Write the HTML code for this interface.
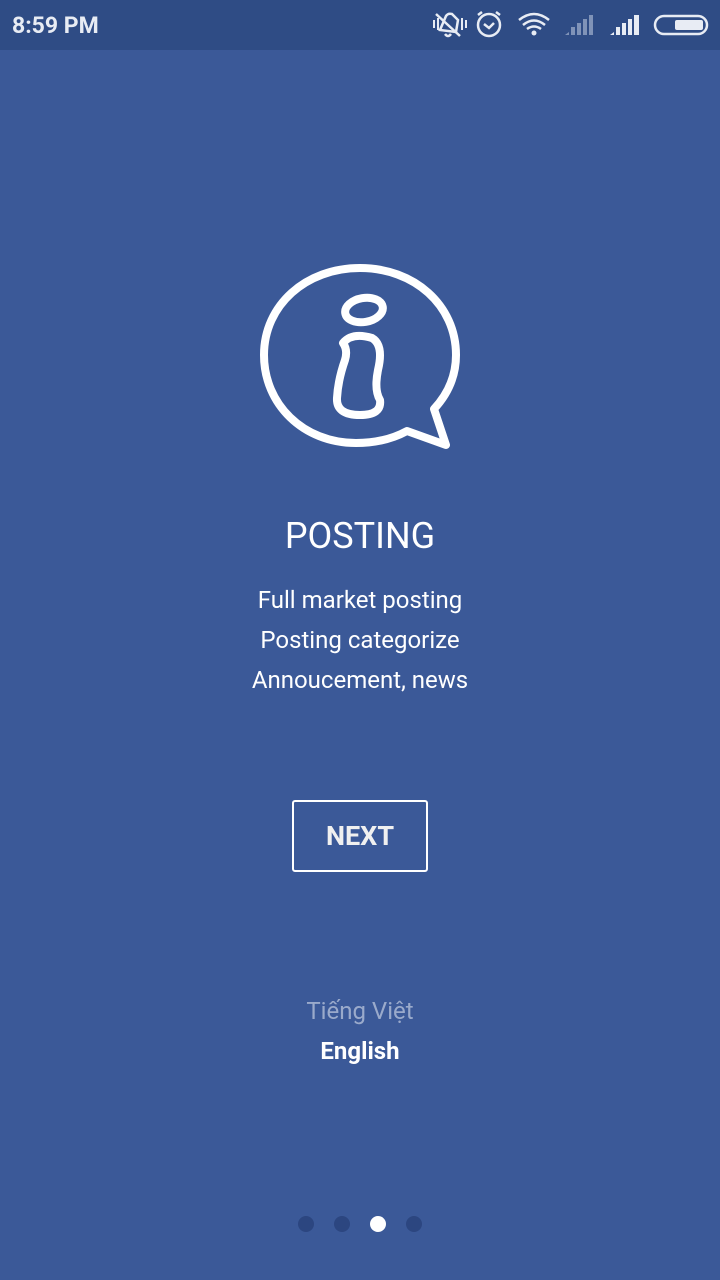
<!DOCTYPE html>
<html><head><meta charset="utf-8"><style>
html,body{margin:0;padding:0}
body{width:720px;height:1280px;background:#3b5998;position:relative;overflow:hidden;font-family:"Roboto","Liberation Sans",sans-serif;color:#fff}
.sb{position:absolute;left:0;top:0;width:720px;height:50px;background:#2f4c85}
.time{position:absolute;left:12px;top:12px;font-size:23px;font-weight:bold;color:#e8ecf4}
.t{position:absolute;left:0;width:720px;text-align:center}
.btn{position:absolute;left:292px;top:800px;width:132px;height:68px;border:2px solid #fff;border-radius:3px;text-align:center;line-height:68px;font-size:27px;font-weight:bold;color:#f0f0f0}
.dot{position:absolute;top:1216px;width:16px;height:16px;border-radius:50%;background:#2c4680}
</style></head><body>
<div class="sb"><div class="time">8:59 PM</div>
<svg width="720" height="50" style="position:absolute;left:0;top:0" fill="none" stroke="#e8ecf4" stroke-width="2.5">
<path d="M440 30 L446 16 Q448 13 452 14 L458 20 L456 32 Z M445 34 Q448 38 451 34"/>
<path d="M436 14 L460 36"/>
<path d="M434 20v8M438 18v12M462 18v12M466 20v8" stroke-width="2"/>
<circle cx="489" cy="25" r="11"/><path d="M484 24 l5 4 l5 -5"/><path d="M478 15 l4 -3 M500 15 l-4 -3"/>
<path d="M519 20 Q534 8 549 20 M523 25 Q534 16 545 25 M527 29 Q534 24 541 29"/><circle cx="534" cy="33" r="2.5" fill="#e8ecf4" stroke="none"/>
<g stroke="none" fill="#8093b8"><path d="M565 35h4v-3z"/><rect x="571" y="27" width="4" height="8"/><rect x="577" y="23" width="4" height="12"/><rect x="583" y="19" width="4" height="16"/><rect x="589" y="15" width="4" height="20"/></g>
<g stroke="none" fill="#e8ecf4"><path d="M610 35h4v-3z"/><rect x="616" y="27" width="4" height="8"/><rect x="622" y="23" width="4" height="12"/><rect x="628" y="19" width="4" height="16"/><rect x="634" y="15" width="5" height="20"/></g>
<rect x="655" y="16" width="52" height="18" rx="9"/><rect x="675" y="20" width="28" height="10" rx="2" fill="#e8ecf4" stroke="none"/>
</svg></div>
<svg width="720" height="500" style="position:absolute;left:0;top:0" fill="none" stroke="#fff" stroke-width="8" stroke-linejoin="round" stroke-linecap="round">
<path d="M407 431 Q385 443 356 443 C303 443 264 404 264 355 C264 305 306 268 360 268 C414 268 456 305 456 355 C456 377 447 395 434 409 L446 445 Z"/>
<ellipse cx="364" cy="310" rx="19" ry="12" transform="rotate(-10 364 310)"/>
<path d="M343 343 Q352 332 372 338 Q384 345 378 370 Q374 390 380 400 Q382 415 360 415 Q336 415 337 398 Q338 380 345 360 Q348 350 343 343 Z"/>
</svg>
<div class="t" style="top:515px;font-size:36px">POSTING</div>
<div class="t" style="top:580px;font-size:24px;line-height:40px">Full market posting<br>Posting categorize<br>Annoucement, news</div>
<div class="btn">NEXT</div>
<div class="t" style="top:997px;font-size:24px;color:#9aaacb">Tiếng Việt</div>
<div class="t" style="top:1037px;font-size:24px;font-weight:bold">English</div>
<div class="dot" style="left:298px"></div>
<div class="dot" style="left:334px"></div>
<div class="dot" style="left:370px;background:#fff"></div>
<div class="dot" style="left:406px"></div>
</body></html>
